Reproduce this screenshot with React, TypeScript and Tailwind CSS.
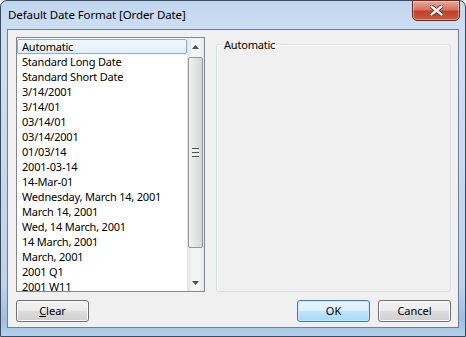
import React from "react";

const items = [
  "Automatic",
  "Standard Long Date",
  "Standard Short Date",
  "3/14/2001",
  "3/14/01",
  "03/14/01",
  "03/14/2001",
  "01/03/14",
  "2001-03-14",
  "14-Mar-01",
  "Wednesday, March 14, 2001",
  "March 14, 2001",
  "Wed, 14 March, 2001",
  "14 March, 2001",
  "March, 2001",
  "2001 Q1",
  "2001 W11",
];

function Btn({ children, primary = false }: { children: React.ReactNode; primary?: boolean }) {
  return (
    <button
      className={
        primary
          ? "w-[73px] h-[22px] rounded-[3px] border border-[#3c7fb1] bg-[linear-gradient(#eaf6fd_0%,#d9f0fc_50%,#bee6fd_51%,#a7d9f5_100%)] text-[11px] text-black flex items-center justify-center shadow-[inset_0_0_0_1px_#c8e8fb]"
          : "w-[73px] h-[22px] rounded-[3px] border border-[#707070] bg-[linear-gradient(#f2f2f2_0%,#ebebeb_50%,#dddddd_51%,#cfcfcf_100%)] text-[11px] text-black flex items-center justify-center shadow-[inset_0_0_0_1px_#fcfcfc]"
      }
    >
      {children}
    </button>
  );
}

export default function App() {
  return (
    <div
      className="w-[466px] h-[337px] overflow-hidden bg-[#f0f0f0]"
      style={{ fontFamily: '"Noto Sans", "Open Sans", sans-serif' }}
    >
      <div className="w-[466px] h-[337px] rounded-t-[7px] border border-[#3b4c5e] bg-[linear-gradient(180deg,#c0d6ee_0%,#cfe0f3_10%,#bcd3ec_85%,#9ebfe3_95%,#b6cfea_100%)] flex flex-col px-[6px] pb-[8px] relative">
        {/* title bar */}
        <div className="h-[28px] flex items-center pl-[1px] shrink-0">
          <span className="text-[11.5px] tracking-[-0.1px] text-black leading-none">Default Date Format [Order Date]</span>
        </div>
        {/* close button */}
        <div className="absolute right-[5px] top-[-1px] w-[48px] h-[21px] rounded-b-[5px] border border-[#6b2a22] bg-[linear-gradient(#e9a99a_0%,#d7735f_45%,#c24127_55%,#cc5a3e_100%)] flex items-center justify-center shadow-[inset_0_0_0_1px_rgba(255,220,210,0.5)]">
          <svg width="13" height="11" viewBox="0 0 13 11">
            <path
              d="M1.5 1.5 L11.5 9.5 M11.5 1.5 L1.5 9.5"
              stroke="#5b1a10"
              strokeWidth="4"
              strokeLinecap="round"
            />
            <path
              d="M1.5 1.5 L11.5 9.5 M11.5 1.5 L1.5 9.5"
              stroke="#ffffff"
              strokeWidth="2.4"
              strokeLinecap="round"
            />
          </svg>
        </div>
        {/* client area */}
        <div className="flex-1 border border-[#6f7f91] bg-[#f0f0f0] flex flex-col pt-[7px] pl-[8px] pr-[7px]">
          <div className="flex h-[255px] gap-[11px]">
            {/* list box */}
            <div className="w-[189px] h-[255px] border border-[#828790] bg-white flex">
              <div className="flex-1 overflow-hidden pt-[1px]">
                {items.map((t, i) => (
                  <div
                    key={t}
                    className={
                      i === 0
                        ? "h-[15px] mx-0 rounded-[2px] border border-[#84acdd] bg-[linear-gradient(#f4f8fd,#e3eefb)] pl-[4px] flex items-center text-[11px] tracking-[-0.2px] text-black whitespace-nowrap leading-none"
                        : "h-[15px] pl-[5px] flex items-center text-[11px] tracking-[-0.2px] text-black whitespace-nowrap leading-none"
                    }
                  >
                    {t}
                  </div>
                ))}
              </div>
              {/* scrollbar */}
              <div className="w-[17px] bg-[linear-gradient(90deg,#e3e3e3,#f4f4f4_30%,#f4f4f4_70%,#e8e8e8)] flex flex-col">
                <div className="h-[17px] flex items-center justify-center">
                  <svg width="7" height="4" viewBox="0 0 7 4">
                    <path d="M3.5 0 L7 4 L0 4 Z" fill="#4d4d4d" />
                  </svg>
                </div>
                <div className="h-[2px]" />
                <div className="h-[191px] mx-[1px] rounded-[2px] border border-[#979797] bg-[linear-gradient(90deg,#f1f1f1,#e3e3e3_50%,#d5d5d5)] flex items-center justify-center">
                  <div className="flex flex-col gap-[1px]">
                    <div className="w-[7px] h-[1px] bg-[#555]" />
                    <div className="w-[7px] h-[1px] bg-[#fff]" />
                    <div className="w-[7px] h-[1px] bg-[#555]" />
                    <div className="w-[7px] h-[1px] bg-[#fff]" />
                    <div className="w-[7px] h-[1px] bg-[#555]" />
                  </div>
                </div>
                <div className="flex-1" />
                <div className="h-[17px] flex items-center justify-center">
                  <svg width="7" height="4" viewBox="0 0 7 4">
                    <path d="M0 0 L7 0 L3.5 4 Z" fill="#4d4d4d" />
                  </svg>
                </div>
              </div>
            </div>
            {/* group box */}
            <fieldset className="w-[235px] h-[255px] border border-[#d5dfe5] rounded-[3px] px-[6px] shadow-[inset_1px_1px_0_#ffffff]">
              <legend className="text-[11px] tracking-[-0.2px] text-black leading-[15px] px-[1px] ml-[0px]">Automatic</legend>
            </fieldset>
          </div>
          <div className="flex items-start mt-[8px]">
            <Btn>
              <span>
                <span className="underline">C</span>lear
              </span>
            </Btn>
            <div className="flex-1" />
            <div className="flex gap-[8px]">
              <Btn primary>OK</Btn>
              <Btn>Cancel</Btn>
            </div>
          </div>
        </div>
      </div>
    </div>
  );
}
